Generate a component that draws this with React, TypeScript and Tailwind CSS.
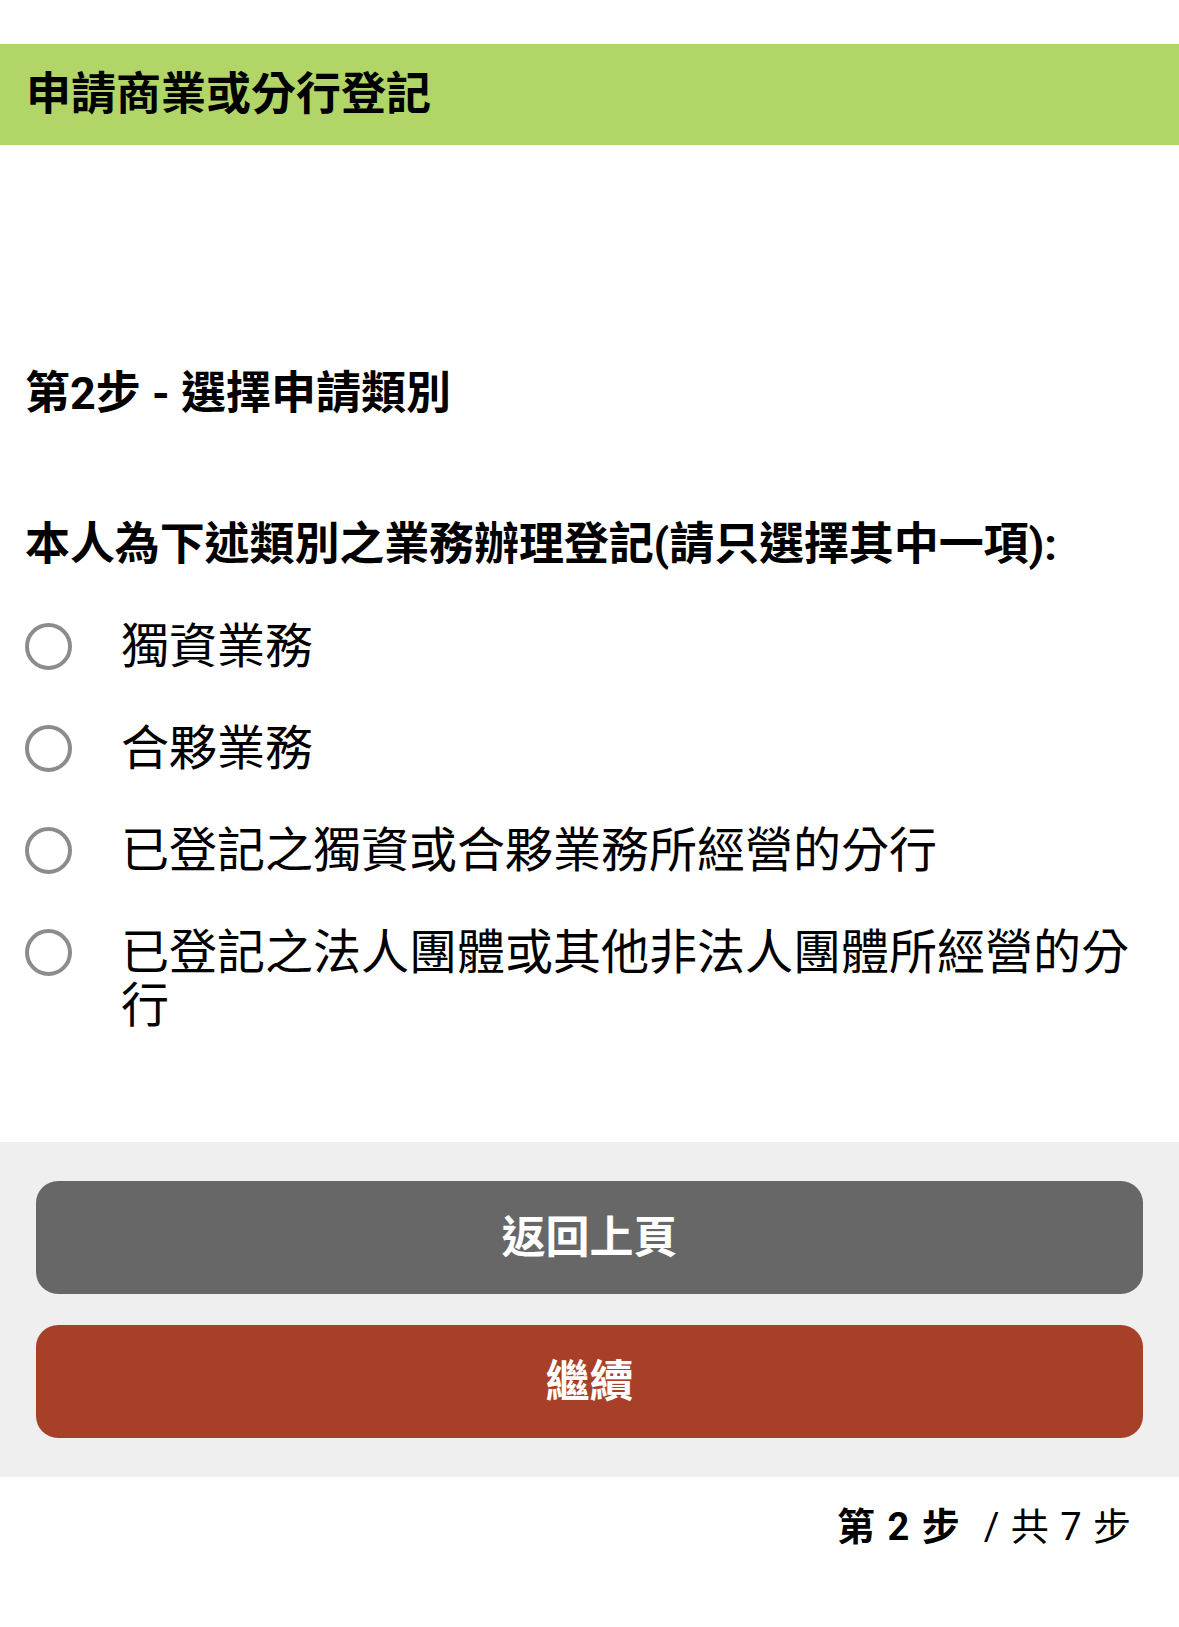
import React from "react";

const options = [
  "獨資業務",
  "合夥業務",
  "已登記之獨資或合夥業務所經營的分行",
  "已登記之法人團體或其他非法人團體所經營的分行",
];

function Radio() {
  return (
    <span className="mt-[3px] box-border h-[47px] w-[47px] shrink-0 rounded-full border-[4px] border-[#8c8c8c] bg-white" />
  );
}

export default function App() {
  return (
    <div
      className="min-h-[1627px] w-full bg-white text-black"
      style={{ fontFamily: 'Roboto, "Liberation Sans", "Noto Sans CJK TC", sans-serif' }}
    >
      <div className="pt-[44px]">
        <header className="flex h-[101px] items-center bg-[#b2d567] px-[26px]">
          <h1 className="text-[45px] font-bold leading-[60px]">申請商業或分行登記</h1>
        </header>
      </div>

      <main className="px-[25px] pb-[110px]">
        <h2 className="mt-[219px] text-[45px] font-bold leading-[60px]">第2步 - 選擇申請類別</h2>

        <p className="mt-[91px] text-[45px] font-bold leading-[60px] tracking-[-0.1px]">
          本人為下述類別之業務辦理登記(請只選擇其中一項):
        </p>

        <div className="mt-[45px] flex flex-col gap-[49px]">
          {options.map((label) => (
            <label key={label} className="flex items-start">
              <Radio />
              <span className="ml-[49px] text-[48px] leading-[53px]">{label}</span>
            </label>
          ))}
        </div>
      </main>

      <section className="flex flex-col gap-[31px] bg-[#efefef] px-[36px] py-[39px]">
        <button className="h-[113px] w-full rounded-[22px] bg-[#676767] text-[44px] font-bold text-white">
          返回上頁
        </button>
        <button className="h-[113px] w-full rounded-[22px] bg-[#a84029] text-[44px] font-bold text-white">
          繼續
        </button>
      </section>

      <footer className="flex justify-end pr-[48px] pt-[25px] text-[38px] leading-[50px]">
        <span className="font-bold [word-spacing:3px]">第 2 步</span>
        <span className="ml-[24px] [word-spacing:2px]">/ 共 7 步</span>
      </footer>
    </div>
  );
}
